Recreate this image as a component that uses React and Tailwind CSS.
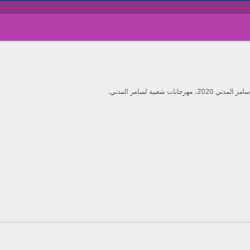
import React from 'react';

export default function App() {
  return (
    <div className="w-[250px] h-[250px] overflow-hidden bg-[#eeeeee] flex flex-col">
      {/* status bar */}
      <div className="h-[14px] bg-[#8f3488] border-t border-[#25408f]" />
      {/* toolbar */}
      <div className="h-[27px] bg-[#b540aa] border-b border-[#c25cb8]" />
      <div className="h-[2px] bg-gradient-to-b from-[#d0d0d0] to-[#eeeeee]" />

      <div className="flex-1 flex flex-col">
        <div className="h-[43px]" />
        <p
          dir="rtl"
          className="text-[7.2px] leading-[11px] text-[#606060] whitespace-nowrap"
          style={{ fontFamily: '"DejaVu Sans Condensed", "DejaVu Sans", sans-serif' }}
        >
          سامر المدني 2020، مهرجانات شعبية لسامر المدني.
        </p>
        <div className="flex-1" />
        <div className="h-[2px] bg-[#e2e2e2] mb-[27px]" />
      </div>
    </div>
  );
}
